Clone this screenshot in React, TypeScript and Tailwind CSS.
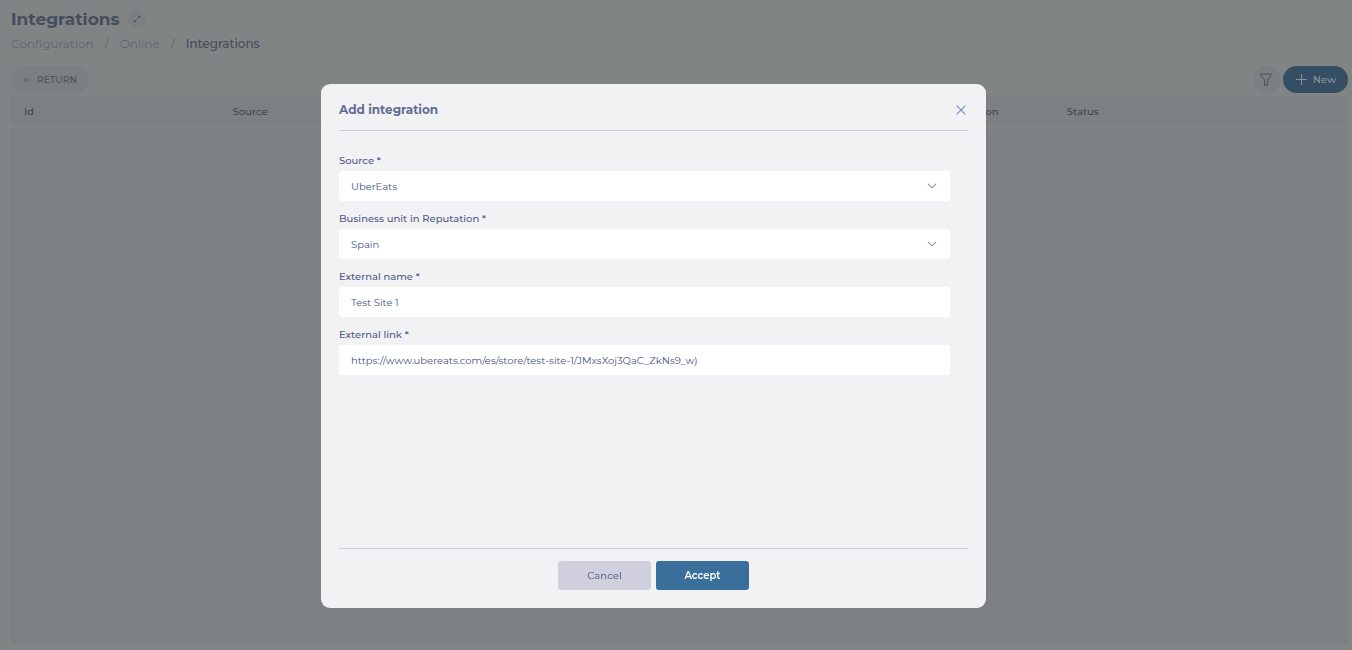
import React, { useState } from "react";

const columns = ["Id", "Source", "", "", "Business unit in Reputation", "Status"];

const inputClass =
  "block h-[30px] w-full appearance-none rounded-[3px] bg-white px-3 text-[10px] text-[#44557f] outline-none";

function Field({ id, label, children }: { id: string; label: string; children: React.ReactNode }) {
  return (
    <div>
      <label htmlFor={id} className="block text-[10px] leading-5 font-medium text-[#4f5a88]">
        {label} *
      </label>
      {children}
    </div>
  );
}

function SelectField({ id, label, options }: { id: string; label: string; options: string[] }) {
  return (
    <Field id={id} label={label}>
      <div className="relative">
        <select id={id} className={inputClass}>
          {options.map((option) => (
            <option key={option}>{option}</option>
          ))}
        </select>
        <svg
          viewBox="0 0 10 6"
          className="pointer-events-none absolute top-3 right-[13px] h-1.5 w-2.5"
          fill="none"
          stroke="#8792b8"
          strokeWidth="1.1"
          strokeLinecap="round"
        >
          <path d="M1.2 1.2L5 4.8l3.8-3.6" />
        </svg>
      </div>
    </Field>
  );
}

export default function App() {
  const [name, setName] = useState("Test Site 1");
  const [link, setLink] = useState("https://www.ubereats.com/es/store/test-site-1/JMxsXoj3QaC_ZkNs9_w)");

  return (
    <div className="flex min-h-screen flex-col bg-[#808484] pt-[7px] pr-1 pb-1.5 pl-[11px] font-[Montserrat,Inter,sans-serif] text-[#454d5d]">
      <header>
        <div className="flex h-6 items-center gap-2">
          <h1 className="text-[17px] leading-6 font-bold">Integrations</h1>
          <button aria-label="Expand" className="flex size-[18px] items-center justify-center rounded-full bg-[#7b7f82]">
            <svg viewBox="0 0 8 8" className="size-2" fill="none" stroke="#4d5460" strokeWidth="0.7">
              <path d="M1.2 6.8l5.6-5.6" />
              <path d="M5.2 1h1.8v1.8zM1 5.2V7h1.8z" fill="#4d5460" />
            </svg>
          </button>
        </div>
        <nav className="mt-[3px] flex h-5 items-center gap-[11px] text-[12px] text-[#60646f]">
          <a href="#configuration">Configuration</a>
          <span>/</span>
          <a href="#online">Online</a>
          <span>/</span>
          <span className="font-medium text-[#464c5a]">Integrations</span>
        </nav>
      </header>

      <div className="mt-3 flex h-[27px] items-center justify-between">
        <button className="flex h-[27px] items-center gap-[7px] rounded-full bg-[#7b7f82] px-3 text-[9px] font-medium tracking-wide text-[#4b515f]">
          <svg viewBox="0 0 7 6" className="h-1.5 w-[7px]" fill="none" stroke="#555b68" strokeWidth="0.8">
            <path d="M7 3H.8M3 .7L.7 3 3 5.3" />
          </svg>
          RETURN
        </button>
        <div className="flex items-center gap-[3px]">
          <button aria-label="Filter" className="flex size-[27px] items-center justify-center rounded-full bg-[#7b7f82]">
            <svg viewBox="0 0 12 13" className="h-[13px] w-3" fill="none" stroke="#4b5060" strokeWidth="1" strokeLinejoin="round">
              <path d="M.8 1h10.4v1.4L7.6 7v5.2H4.6V7L.8 2.4z" />
            </svg>
          </button>
          <button className="flex h-[27px] items-center gap-[5px] rounded-full bg-[#344f64] px-3 text-[10px] font-medium text-[#8f959b]">
            <svg viewBox="0 0 13 13" className="size-[13px]" fill="none" stroke="#898f95" strokeWidth="1.1">
              <path d="M6.5 1v11M1 6.5h11" />
            </svg>
            New
          </button>
        </div>
      </div>

      <main className="mt-[3px] flex flex-1 flex-col gap-[3px]">
        <table className="w-full table-fixed bg-[#7c8082]">
          <thead>
            <tr className="h-[30px] text-left text-[10px] text-[#3f4555]">
              {columns.map((column, index) => (
                <th key={index} className="w-[15.6%] pl-[13px] font-medium whitespace-nowrap">
                  {column}
                </th>
              ))}
              <td />
            </tr>
          </thead>
        </table>
        <section className="flex-1 bg-[#7c8082]" />
      </main>

      <div className="fixed inset-0 flex items-center justify-center pt-[42px] pr-[45px]">
        <form
          role="dialog"
          aria-labelledby="dialog-title"
          onSubmit={(event) => event.preventDefault()}
          className="flex min-h-[524px] w-full max-w-[665px] flex-col rounded-[9px] bg-[#f2f2f5] px-[18px]"
        >
          <div className="flex h-[47px] items-center justify-between border-b border-[#d0d0dd] pt-1.5">
            <h2 id="dialog-title" className="text-[12px] font-bold text-[#626c95]">
              Add integration
            </h2>
            <button type="button" aria-label="Close" className="p-0.5">
              <svg viewBox="0 0 10 10" className="size-2.5" fill="none" stroke="#7c88b2" strokeWidth="1.1">
                <path d="M.7.7l8.6 8.6M9.3.7L.7 9.3" />
              </svg>
            </button>
          </div>
          <div className="flex flex-1 flex-col gap-2 pt-5 pr-[18px]">
            <SelectField id="source" label="Source" options={["UberEats"]} />
            <SelectField id="unit" label="Business unit in Reputation" options={["Spain"]} />
            <Field id="name" label="External name">
              <input id="name" className={inputClass} value={name} onChange={(e) => setName(e.target.value)} />
            </Field>
            <Field id="link" label="External link">
              <input id="link" className={inputClass} value={link} onChange={(e) => setLink(e.target.value)} />
            </Field>
          </div>
          <div className="flex justify-center gap-[5px] border-t border-[#d0d0dd] pt-3 pb-[18px] text-[10px]">
            <button type="button" className="h-[29px] w-[93px] rounded-[3px] bg-[#d0cfde] font-medium text-[#646b8a]">
              Cancel
            </button>
            <button type="submit" className="h-[29px] w-[93px] rounded-[3px] bg-[#3a6f9b] font-semibold text-white">
              Accept
            </button>
          </div>
        </form>
      </div>
    </div>
  );
}
